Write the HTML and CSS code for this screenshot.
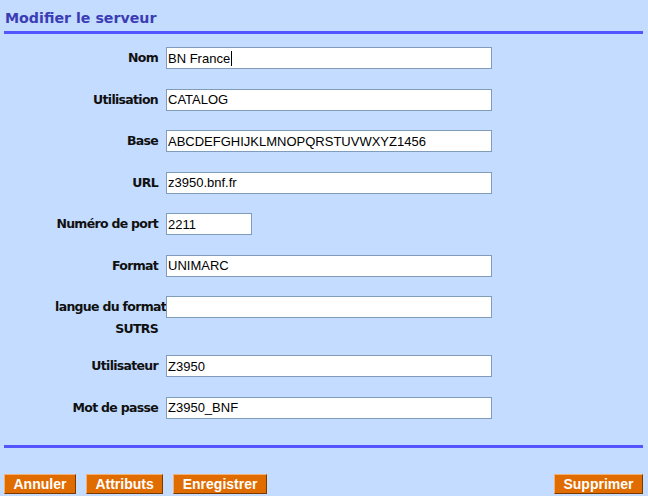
FILE: index.html
```html
<!DOCTYPE html>
<html lang="fr">
<head>
<meta charset="utf-8">
<title>Modifier le serveur</title>
<link rel="stylesheet" href="styles.css">
</head>
<body>
<div class="page">
  <h1 class="title">Modifier le serveur</h1>
  <form class="form">
    <label class="label" for="f-nom">Nom</label>
    <div class="field"><input class="input" id="f-nom" type="text" value="BN France"><span class="caret"></span></div>
    <label class="label" for="f-util">Utilisation</label>
    <div class="field"><input class="input" id="f-util" type="text" value="CATALOG"></div>
    <label class="label" for="f-base">Base</label>
    <div class="field"><input class="input" id="f-base" type="text" value="ABCDEFGHIJKLMNOPQRSTUVWXYZ1456"></div>
    <label class="label" for="f-url">URL</label>
    <div class="field"><input class="input" id="f-url" type="text" value="z3950.bnf.fr"></div>
    <label class="label" for="f-port">Numéro de port</label>
    <div class="field"><input class="input input-short" id="f-port" type="text" value="2211"></div>
    <label class="label" for="f-format">Format</label>
    <div class="field"><input class="input" id="f-format" type="text" value="UNIMARC"></div>
    <label class="label label-wrap" for="f-langue"><span class="overhang">langue du format</span><br>SUTRS</label>
    <div class="field"><input class="input" id="f-langue" type="text" value=""></div>
    <label class="label" for="f-user">Utilisateur</label>
    <div class="field"><input class="input" id="f-user" type="text" value="Z3950"></div>
    <label class="label" for="f-pass">Mot de passe</label>
    <div class="field"><input class="input" id="f-pass" type="text" value="Z3950_BNF"></div>
  </form>
  <div class="footer">
    <div class="actions">
      <button class="btn" type="button">Annuler</button>
      <button class="btn" type="button">Attributs</button>
      <button class="btn" type="button">Enregistrer</button>
    </div>
    <button class="btn" type="button">Supprimer</button>
  </div>
</div>
</body>
</html>
```
FILE: styles.css
```css
html, body {
  margin: 0;
  padding: 0;
  background: #c4dcff;
}
body {
  width: 648px;
  height: 496px;
  overflow: hidden;
}
.page {
  padding: 0 5px 0 4px;
}
.title {
  margin: 0;
  padding: 10px 0 4px 1px;
  font-family: "DejaVu Sans", Verdana, sans-serif;
  font-weight: bold;
  font-size: 14.2px;
  line-height: 17px;
  color: #3c3cb4;
  border-bottom: 3px solid #5555ff;
}
.form {
  display: grid;
  grid-template-columns: 154px 1fr;
  column-gap: 8px;
  row-gap: 19.5px;
  align-items: start;
  margin: 13px 0 0;
  padding-bottom: 26px;
  border-bottom: 3px solid #5555ff;
}
.label {
  font-family: "DejaVu Sans", Verdana, sans-serif;
  font-weight: bold;
  font-size: 12.5px;
  letter-spacing: -0.7px;
  line-height: 22px;
  color: #101010;
  text-align: right;
  white-space: nowrap;
}
.label-wrap {
  margin-bottom: -4.5px;
}
.overhang {
  margin-right: -8px;
}
.field {
  position: relative;
  height: 22px;
}
.input {
  box-sizing: border-box;
  width: 326px;
  height: 22px;
  margin: 0;
  padding: 0 2px 0 1px;
  border: 1px solid #7f9db9;
  background: #fff;
  font-family: "Liberation Sans", Arial, sans-serif;
  font-size: 13px;
  color: #000;
  outline: none;
}
.input-short {
  width: 86px;
}
.caret {
  position: absolute;
  left: 65px;
  top: 4px;
  width: 1px;
  height: 15px;
  background: #000;
}
.footer {
  display: flex;
  justify-content: space-between;
  align-items: center;
  margin-top: 26px;
}
.actions {
  display: flex;
  gap: 10px;
}
.btn {
  box-sizing: border-box;
  height: 20px;
  margin: 0;
  padding: 0 8.5px;
  background: #e06c00;
  border: 1px solid;
  border-color: #f4b070 #7a3a00 #7a3a00 #f4b070;
  font-family: "Liberation Sans", Arial, sans-serif;
  font-weight: bold;
  font-size: 14px;
  line-height: 18px;
  color: #fff;
}
```
